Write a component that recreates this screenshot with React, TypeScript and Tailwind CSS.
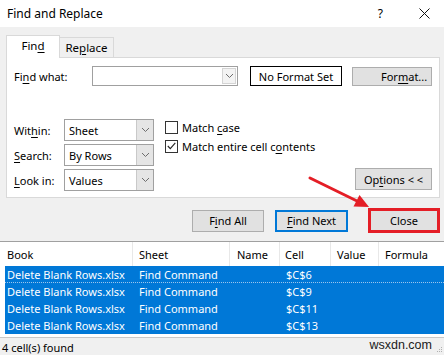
import React from "react";

const Chevron = () => (
  <svg width="9" height="6" viewBox="0 0 9 6" className="block">
    <path d="M1 1 L4.5 4.5 L8 1" fill="none" stroke="#6d6d6d" strokeWidth="1" />
  </svg>
);

const Select = ({ value }: { value: string }) => (
  <div className="flex h-[22px] w-[90px] border border-[#a0a0a0] bg-white">
    <div className="flex flex-1 items-center pl-[4px] text-black">{value}</div>
    <div className="flex w-[17px] items-center justify-center border-l border-[#c9c9c9] bg-[#e5e5e5]">
      <Chevron />
    </div>
  </div>
);

const Btn = ({ children, cls }: { children: React.ReactNode; cls: string }) => (
  <div className={`flex items-center justify-center bg-[#e1e1e1] text-black ${cls}`}>{children}</div>
);

const rows = ["$C$6", "$C$9", "$C$11", "$C$13"];

export default function App() {
  return (
    <div
      className="relative h-[355px] w-[444px] overflow-hidden bg-[#f0f0f0] text-[11px] leading-none text-black"
      style={{ fontFamily: '"Noto Sans", "Open Sans", sans-serif' }}
    >
      {/* Title bar */}
      <div className="flex h-[27px] items-center bg-white pl-[7px] pr-[14px]">
        <div className="flex-1 text-[12px]">Find and Replace</div>
        <div className="mr-[36px] text-[12px]">?</div>
        <svg width="11" height="11" viewBox="0 0 11 11">
          <path d="M0.5 0.5 L10.5 10.5 M10.5 0.5 L0.5 10.5" stroke="#111" strokeWidth="1" />
        </svg>
      </div>

      {/* Tabs */}
      <div className="flex h-[30px] items-end pl-[6px] pt-[7px]">
        <div className="relative z-10 -mb-px flex h-[23px] w-[54px] items-center justify-center border border-b-0 border-[#d9d9d9] bg-white pb-[2px] text-[11.5px]">
          <span>
            Fin<span className="underline underline-offset-2">d</span>
          </span>
        </div>
        <div className="flex h-[20px] w-[54px] items-center justify-center border border-l-0 border-b-0 border-[#d9d9d9] bg-[#f0f0f0] pt-[1px] text-[11.5px]">
          <span>
            Re<span className="underline underline-offset-2">p</span>lace
          </span>
        </div>
      </div>

      {/* Panel */}
      <div className="ml-[6px] flex h-[141px] w-[434px] flex-col border border-[#d9d9d9] bg-white pl-[7px] pr-[7px] pt-[8px]">
        <div className="flex h-[20px] items-center">
          <div className="w-[78px]">
            Fi<span className="underline underline-offset-2">n</span>d what:
          </div>
          <div className="flex h-[20px] w-[146px] border border-[#a0a0a0] bg-white">
            <div className="flex-1" />
            <div className="my-[1px] mr-[1px] flex w-[14px] items-center justify-center border border-[#d4d4d4] bg-[#f3f3f3]">
              <Chevron />
            </div>
          </div>
          <div className="ml-[12px] flex h-[20px] w-[92px] items-center justify-center border border-black bg-white">
            No Format Set
          </div>
          <div className="ml-[10px] flex h-[19px] w-[80px] items-center border border-[#adadad] bg-[#e1e1e1] pl-[28px]">
            <span>
              For<span className="underline underline-offset-2">m</span>at...
            </span>
            <svg width="7" height="4" viewBox="0 0 7 4" className="ml-auto mr-[4px]">
              <path d="M0 0 L7 0 L3.5 4 Z" fill="#000" />
            </svg>
          </div>
        </div>

        <div className="mt-[33px] flex">
          <div className="flex flex-col gap-[3px]">
            <div className="flex items-center">
              <div className="w-[50px]">
                Wit<span className="underline underline-offset-2">h</span>in:
              </div>
              <Select value="Sheet" />
            </div>
            <div className="flex items-center">
              <div className="w-[50px]">
                <span className="underline underline-offset-2">S</span>earch:
              </div>
              <Select value="By Rows" />
            </div>
            <div className="flex items-center">
              <div className="w-[50px]">
                <span className="underline underline-offset-2">L</span>ook in:
              </div>
              <Select value="Values" />
            </div>
          </div>

          <div className="ml-[11px] flex flex-col gap-[5px] pt-[1px]">
            <div className="flex h-[14px] items-center">
              <div className="h-[13px] w-[13px] border border-[#333] bg-white" />
              <span className="ml-[4px]">
                Match <span className="underline underline-offset-2">c</span>ase
              </span>
            </div>
            <div className="flex h-[14px] items-center">
              <div className="flex h-[13px] w-[13px] items-center justify-center border border-[#333] bg-white">
                <svg width="9" height="8" viewBox="0 0 9 8">
                  <path d="M0.8 4 L3.3 6.6 L8.3 0.8" fill="none" stroke="#222" strokeWidth="1.1" />
                </svg>
              </div>
              <span className="ml-[4px]">
                Match entire cell c<span className="underline underline-offset-2">o</span>ntents
              </span>
            </div>
          </div>

          <div className="flex-1" />
          <Btn cls="mb-[1px] h-[22px] w-[77px] self-end border border-[#adadad]">
            <span>
              Op<span className="underline underline-offset-2">t</span>ions &lt; &lt;
            </span>
          </Btn>
        </div>
      </div>

      {/* Buttons */}
      <div className="mt-[10px] flex h-[25px] items-center justify-end pr-[4px]">
        <Btn cls="h-[22px] w-[72px] border border-[#adadad]">
          <span>
            F<span className="underline underline-offset-2">i</span>nd All
          </span>
        </Btn>
        <Btn cls="ml-[11px] h-[22px] w-[73px] border-2 border-[#0078d7]">
          <span>
            <span className="underline underline-offset-2">F</span>ind Next
          </span>
        </Btn>
        <Btn cls="ml-[20px] h-[25px] w-[72px] border-[3px] border-[#e41e26]">
          <span>Close</span>
        </Btn>
      </div>

      {/* Results table */}
      <div className="mt-[8px] border-t border-[#a0a0a0] bg-white">
        <div className="flex h-[24px] items-center">
          <div className="flex h-full w-[133px] items-center border-r border-[#e8e8e8] pl-[7px]">Book</div>
          <div className="flex h-full w-[97px] items-center border-r border-[#e8e8e8] pl-[6px]">Sheet</div>
          <div className="flex h-full w-[50px] items-center border-r border-[#e8e8e8] pl-[7px]">Name</div>
          <div className="flex h-full w-[51px] items-center border-r border-[#e8e8e8] pl-[5px]">Cell</div>
          <div className="flex h-full w-[48px] items-center border-r border-[#e8e8e8] pl-[6px]">Value</div>
          <div className="flex h-full flex-1 items-center pl-[6px]">Formula</div>
        </div>
        <div className="ml-[5px] pb-[3px]">
          {rows.map((c, i) => (
            <div
              key={c}
              className={`flex h-[17px] items-center bg-[#0078d7] text-white ${
                i === 0 ? "border-b border-dotted border-[#9cc4ec]" : ""
              }`}
            >
              <div className="w-[128px] pl-[2px]">Delete Blank Rows.xlsx</div>
              <div className="w-[147px] pl-[6px]">Find Command</div>
              <div className="pl-[6px]">{c}</div>
            </div>
          ))}
        </div>
      </div>

      {/* Status bar */}
      <div className="flex h-[19px] items-center border-t border-[#c8c8c8] pl-[2px]">
        <span className="flex-1">4 cell(s) found</span>
        <span
          className="mb-[3px] mr-[12px] text-[12.5px] text-[#1a1a1a]"
          style={{ fontFamily: '"Liberation Sans", Arial, sans-serif' }}
        >
          wsxdn.com
        </span>
      </div>

      {/* resize grip */}
      <svg className="absolute bottom-[2px] right-[1px]" width="6" height="6" viewBox="0 0 6 6">
        <rect x="4" y="0" width="1" height="1" fill="#b0b0b0" />
        <rect x="2" y="2" width="1" height="1" fill="#b0b0b0" />
        <rect x="4" y="2" width="1" height="1" fill="#b0b0b0" />
        <rect x="0" y="4" width="1" height="1" fill="#b0b0b0" />
        <rect x="2" y="4" width="1" height="1" fill="#b0b0b0" />
        <rect x="4" y="4" width="1" height="1" fill="#b0b0b0" />
      </svg>

      {/* red arrow */}
      <svg className="pointer-events-none absolute left-0 top-0" width="444" height="355">
        <line x1="310" y1="178" x2="357" y2="201" stroke="#e41e26" strokeWidth="3" strokeLinecap="round" />
        <polygon points="369,207 353.5,206.5 359.5,195" fill="#e41e26" />
      </svg>
    </div>
  );
}
